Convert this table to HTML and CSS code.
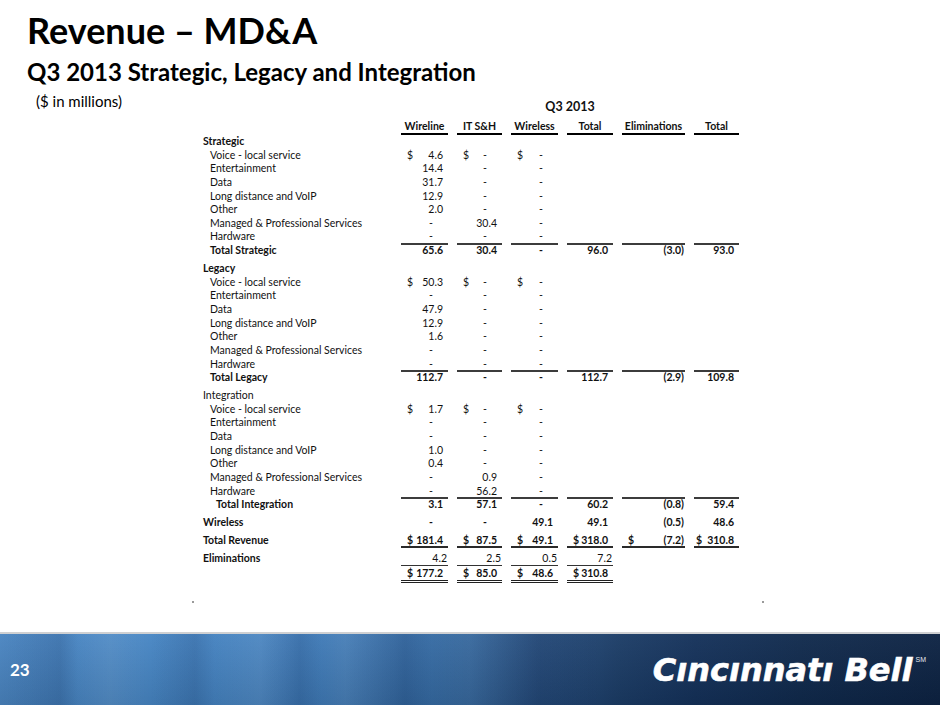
FILE: index.html
```html
<!DOCTYPE html>
<html lang="en">
<head>
<meta charset="utf-8">
<title>Revenue – MD&amp;A</title>
<link rel="stylesheet" href="styles.css">
</head>
<body>
<div class="slide">
  <header class="head">
    <h1 class="title">Revenue – MD&amp;A</h1>
    <h2 class="subtitle">Q3 2013 Strategic, Legacy and Integration</h2>
  </header>
  <main class="body">
    <p class="units">($ in millions)</p>
    <div class="sheet">
      <div class="row period"><span></span><span class="q">Q3 2013</span></div>
      <div class="row hdr"><span></span><span class="h">Wireline</span><span class="h">IT S&amp;H</span><span class="h">Wireless</span><span class="h">Total</span><span class="h">Eliminations</span><span class="h">Total</span></div>

      <div class="row first"><span class="lbl sec">Strategic</span></div>
      <div class="row"><span class="lbl">Voice - local service</span><span class="c"><span class="cur">$</span><span class="v">4.6</span></span><span class="c"><span class="cur">$</span><span class="v z">-</span></span><span class="c"><span class="cur">$</span><span class="v z">-</span></span></div>
      <div class="row"><span class="lbl">Entertainment</span><span class="c"><span class="v">14.4</span></span><span class="c"><span class="v z">-</span></span><span class="c"><span class="v z">-</span></span></div>
      <div class="row"><span class="lbl">Data</span><span class="c"><span class="v">31.7</span></span><span class="c"><span class="v z">-</span></span><span class="c"><span class="v z">-</span></span></div>
      <div class="row"><span class="lbl">Long distance and VoIP</span><span class="c"><span class="v">12.9</span></span><span class="c"><span class="v z">-</span></span><span class="c"><span class="v z">-</span></span></div>
      <div class="row"><span class="lbl">Other</span><span class="c"><span class="v">2.0</span></span><span class="c"><span class="v z">-</span></span><span class="c"><span class="v z">-</span></span></div>
      <div class="row"><span class="lbl">Managed &amp; Professional Services</span><span class="c"><span class="v z">-</span></span><span class="c"><span class="v">30.4</span></span><span class="c"><span class="v z">-</span></span></div>
      <div class="row"><span class="lbl">Hardware</span><span class="c"><span class="v z">-</span></span><span class="c"><span class="v z">-</span></span><span class="c"><span class="v z">-</span></span></div>
      <div class="row tot"><span class="lbl">Total Strategic</span><span class="c"><span class="v">65.6</span></span><span class="c"><span class="v">30.4</span></span><span class="c"><span class="v z">-</span></span><span class="c"><span class="v">96.0</span></span><span class="c"><span class="v neg">(3.0)</span></span><span class="c"><span class="v">93.0</span></span></div>

      <div class="row gap"><span class="lbl sec">Legacy</span></div>
      <div class="row"><span class="lbl">Voice - local service</span><span class="c"><span class="cur">$</span><span class="v">50.3</span></span><span class="c"><span class="cur">$</span><span class="v z">-</span></span><span class="c"><span class="cur">$</span><span class="v z">-</span></span></div>
      <div class="row"><span class="lbl">Entertainment</span><span class="c"><span class="v z">-</span></span><span class="c"><span class="v z">-</span></span><span class="c"><span class="v z">-</span></span></div>
      <div class="row"><span class="lbl">Data</span><span class="c"><span class="v">47.9</span></span><span class="c"><span class="v z">-</span></span><span class="c"><span class="v z">-</span></span></div>
      <div class="row"><span class="lbl">Long distance and VoIP</span><span class="c"><span class="v">12.9</span></span><span class="c"><span class="v z">-</span></span><span class="c"><span class="v z">-</span></span></div>
      <div class="row"><span class="lbl">Other</span><span class="c"><span class="v">1.6</span></span><span class="c"><span class="v z">-</span></span><span class="c"><span class="v z">-</span></span></div>
      <div class="row"><span class="lbl">Managed &amp; Professional Services</span><span class="c"><span class="v z">-</span></span><span class="c"><span class="v z">-</span></span><span class="c"><span class="v z">-</span></span></div>
      <div class="row"><span class="lbl">Hardware</span><span class="c"><span class="v z">-</span></span><span class="c"><span class="v z">-</span></span><span class="c"><span class="v z">-</span></span></div>
      <div class="row tot"><span class="lbl">Total Legacy</span><span class="c"><span class="v">112.7</span></span><span class="c"><span class="v z">-</span></span><span class="c"><span class="v z">-</span></span><span class="c"><span class="v">112.7</span></span><span class="c"><span class="v neg">(2.9)</span></span><span class="c"><span class="v">109.8</span></span></div>

      <div class="row gap"><span class="lbl sec light">Integration</span></div>
      <div class="row"><span class="lbl">Voice - local service</span><span class="c"><span class="cur">$</span><span class="v">1.7</span></span><span class="c"><span class="cur">$</span><span class="v z">-</span></span><span class="c"><span class="cur">$</span><span class="v z">-</span></span></div>
      <div class="row"><span class="lbl">Entertainment</span><span class="c"><span class="v z">-</span></span><span class="c"><span class="v z">-</span></span><span class="c"><span class="v z">-</span></span></div>
      <div class="row"><span class="lbl">Data</span><span class="c"><span class="v z">-</span></span><span class="c"><span class="v z">-</span></span><span class="c"><span class="v z">-</span></span></div>
      <div class="row"><span class="lbl">Long distance and VoIP</span><span class="c"><span class="v">1.0</span></span><span class="c"><span class="v z">-</span></span><span class="c"><span class="v z">-</span></span></div>
      <div class="row"><span class="lbl">Other</span><span class="c"><span class="v">0.4</span></span><span class="c"><span class="v z">-</span></span><span class="c"><span class="v z">-</span></span></div>
      <div class="row"><span class="lbl">Managed &amp; Professional Services</span><span class="c"><span class="v z">-</span></span><span class="c"><span class="v">0.9</span></span><span class="c"><span class="v z">-</span></span></div>
      <div class="row"><span class="lbl">Hardware</span><span class="c"><span class="v z">-</span></span><span class="c"><span class="v">56.2</span></span><span class="c"><span class="v z">-</span></span></div>
      <div class="row tot"><span class="lbl deep">Total Integration</span><span class="c"><span class="v">3.1</span></span><span class="c"><span class="v">57.1</span></span><span class="c"><span class="v z">-</span></span><span class="c"><span class="v">60.2</span></span><span class="c"><span class="v neg">(0.8)</span></span><span class="c"><span class="v">59.4</span></span></div>

      <div class="row gap strong"><span class="lbl sec">Wireless</span><span class="c"><span class="v z">-</span></span><span class="c"><span class="v z">-</span></span><span class="c"><span class="v">49.1</span></span><span class="c"><span class="v">49.1</span></span><span class="c"><span class="v neg">(0.5)</span></span><span class="c"><span class="v">48.6</span></span></div>

      <div class="row gap strong rev"><span class="lbl sec">Total Revenue</span><span class="c"><span class="cur">$</span><span class="v">181.4</span></span><span class="c"><span class="cur">$</span><span class="v">87.5</span></span><span class="c"><span class="cur">$</span><span class="v">49.1</span></span><span class="c"><span class="cur">$</span><span class="v">318.0</span></span><span class="c"><span class="cur">$</span><span class="v neg">(7.2)</span></span><span class="c"><span class="cur tight">$</span><span class="v">310.8</span></span></div>

      <div class="row gap elim"><span class="lbl sec">Eliminations</span><span class="c"><span class="v flat">4.2</span></span><span class="c"><span class="v flat">2.5</span></span><span class="c"><span class="v flat">0.5</span></span><span class="c"><span class="v flat">7.2</span></span></div>
      <div class="row strong net"><span></span><span class="c"><span class="cur">$</span><span class="v">177.2</span></span><span class="c"><span class="cur">$</span><span class="v">85.0</span></span><span class="c"><span class="cur">$</span><span class="v">48.6</span></span><span class="c"><span class="cur">$</span><span class="v">310.8</span></span></div>

      <div class="marks"><span class="mark"></span><span class="mark"></span></div>
    </div>
  </main>
  <footer class="band">
    <span class="page">23</span>
    <div class="logo"><span class="brand">Cıncınnatı Bell</span><span class="sm">SM</span></div>
  </footer>
</div>
</body>
</html>
```
FILE: styles.css
```css
* { box-sizing: border-box; margin: 0; padding: 0; }

html, body {
  width: 940px;
  height: 705px;
  overflow: hidden;
  background: #ffffff;
}

body {
  font-family: Lato, "Open Sans", sans-serif;
  color: #000000;
}

.slide {
  width: 940px;
  height: 705px;
  display: flex;
  flex-direction: column;
}

/* ---------- heading ---------- */
.head {
  padding: 10px 0 0 27px;
}

.title {
  font-size: 36px;
  line-height: 40px;
  font-weight: 700;
}

.subtitle {
  margin-top: 7.5px;
  font-size: 24px;
  line-height: 28px;
  font-weight: 700;
}

/* ---------- body ---------- */
.body {
  flex: 1;
  display: flex;
  padding-left: 36px;
}

.units {
  width: 167px;
  flex: none;
  margin-top: 6px;
  height: 18px;
  font-size: 15px;
  line-height: 18px;
}

.sheet {
  margin-top: 14px;
  width: 536px;
  font-size: 10.5px;
  color: #111111;
  font-variant-numeric: tabular-nums;
}

.row {
  display: grid;
  grid-template-columns: 189px 47px 45px 47px 46px 63px 45px;
  column-gap: 9px;
  height: 13.65px;
  line-height: 13.65px;
  white-space: nowrap;
}

.period {
  height: 14px;
  line-height: 14px;
}

.period .q {
  grid-column: 2 / 8;
  text-align: center;
  font-weight: 700;
  font-size: 12.5px;
}

.hdr {
  margin-top: 6px;
  height: 15px;
  line-height: 13px;
}

.hdr .h {
  text-align: center;
  font-weight: 700;
  border-bottom: 2px solid #000000;
}

.first { margin-top: 0.5px; }
.gap { margin-top: 4.3px; }

.lbl { padding-left: 7px; }
.lbl.sec { padding-left: 0; font-weight: 700; }
.lbl.sec.light { font-weight: 400; }
.lbl.deep { padding-left: 13px; }

.tot, .strong, .elim .lbl { font-weight: 700; }

.c {
  display: flex;
  align-items: center;
}

.cur { padding-left: 6px; }
.cur.tight { padding-left: 2px; }

.v {
  margin-left: auto;
  padding-right: 5px;
}

.v.neg { padding-right: 1px; }
.v.z { padding-right: 15px; }
.v.flat { padding-right: 1px; font-weight: 400; }

.tot .c { box-shadow: 0 -1px 0 0 #3c3c3c, inset 0 1px 0 #3c3c3c; }
.rev .c { box-shadow: inset 0 -2px 0 #2a2a2a; }
.elim .c { box-shadow: inset 0 -1px 0 #333333; }
.net { margin-top: 1px; }
.net .c {
  height: 16.6px;
  border-bottom: 3px double #222222;
}

.marks {
  margin: 21px 0 0 -11px;
  width: 572px;
  display: flex;
  justify-content: space-between;
}

.mark {
  width: 2px;
  height: 2px;
  background: #9a9a9a;
}

/* ---------- footer band ---------- */
.band {
  flex: none;
  height: 73px;
  border-top: 2px solid #cfd0d2;
  display: flex;
  align-items: center;
  justify-content: space-between;
  padding: 0 14px 0 10px;
  background:
    linear-gradient(180deg, rgba(255,255,255,0.04) 0%, rgba(0,0,0,0.10) 100%),
    linear-gradient(90deg,
      rgba(0,0,0,0) 0px, rgba(10,40,90,0.18) 60px, rgba(0,0,0,0) 78px,
      rgba(255,255,255,0.06) 110px, rgba(0,0,0,0) 150px,
      rgba(10,40,90,0.16) 195px, rgba(0,0,0,0) 215px,
      rgba(255,255,255,0.06) 260px, rgba(10,40,90,0.16) 300px, rgba(0,0,0,0) 322px,
      rgba(255,255,255,0.05) 345px, rgba(10,40,90,0.2) 405px, rgba(0,0,0,0) 432px,
      rgba(255,255,255,0.04) 470px, rgba(10,30,70,0.15) 540px, rgba(0,0,0,0) 600px),
    linear-gradient(90deg, #4a85c1 0%, #4786c4 16%, #427fbd 30%, #3b73ad 42%,
      #30639a 50%, #274f80 57%, #1b3c66 66%, #14315a 74%, #102a4d 85%, #0d2343 100%);
}

.page {
  color: #ffffff;
  font-weight: 700;
  font-size: 17px;
  line-height: 20px;
}

.logo {
  display: flex;
  align-items: flex-start;
  color: #ffffff;
}

.brand {
  font-family: "DejaVu Sans", sans-serif;
  font-style: italic;
  font-weight: 700;
  font-size: 32px;
  line-height: 36px;
  letter-spacing: 0;
  -webkit-text-stroke: 0.6px #ffffff;
}

.sm {
  font-family: "Liberation Sans", sans-serif;
  font-size: 7px;
  line-height: 8px;
  margin: 4px 0 0 3px;
  color: #e6e9ee;
}
```
